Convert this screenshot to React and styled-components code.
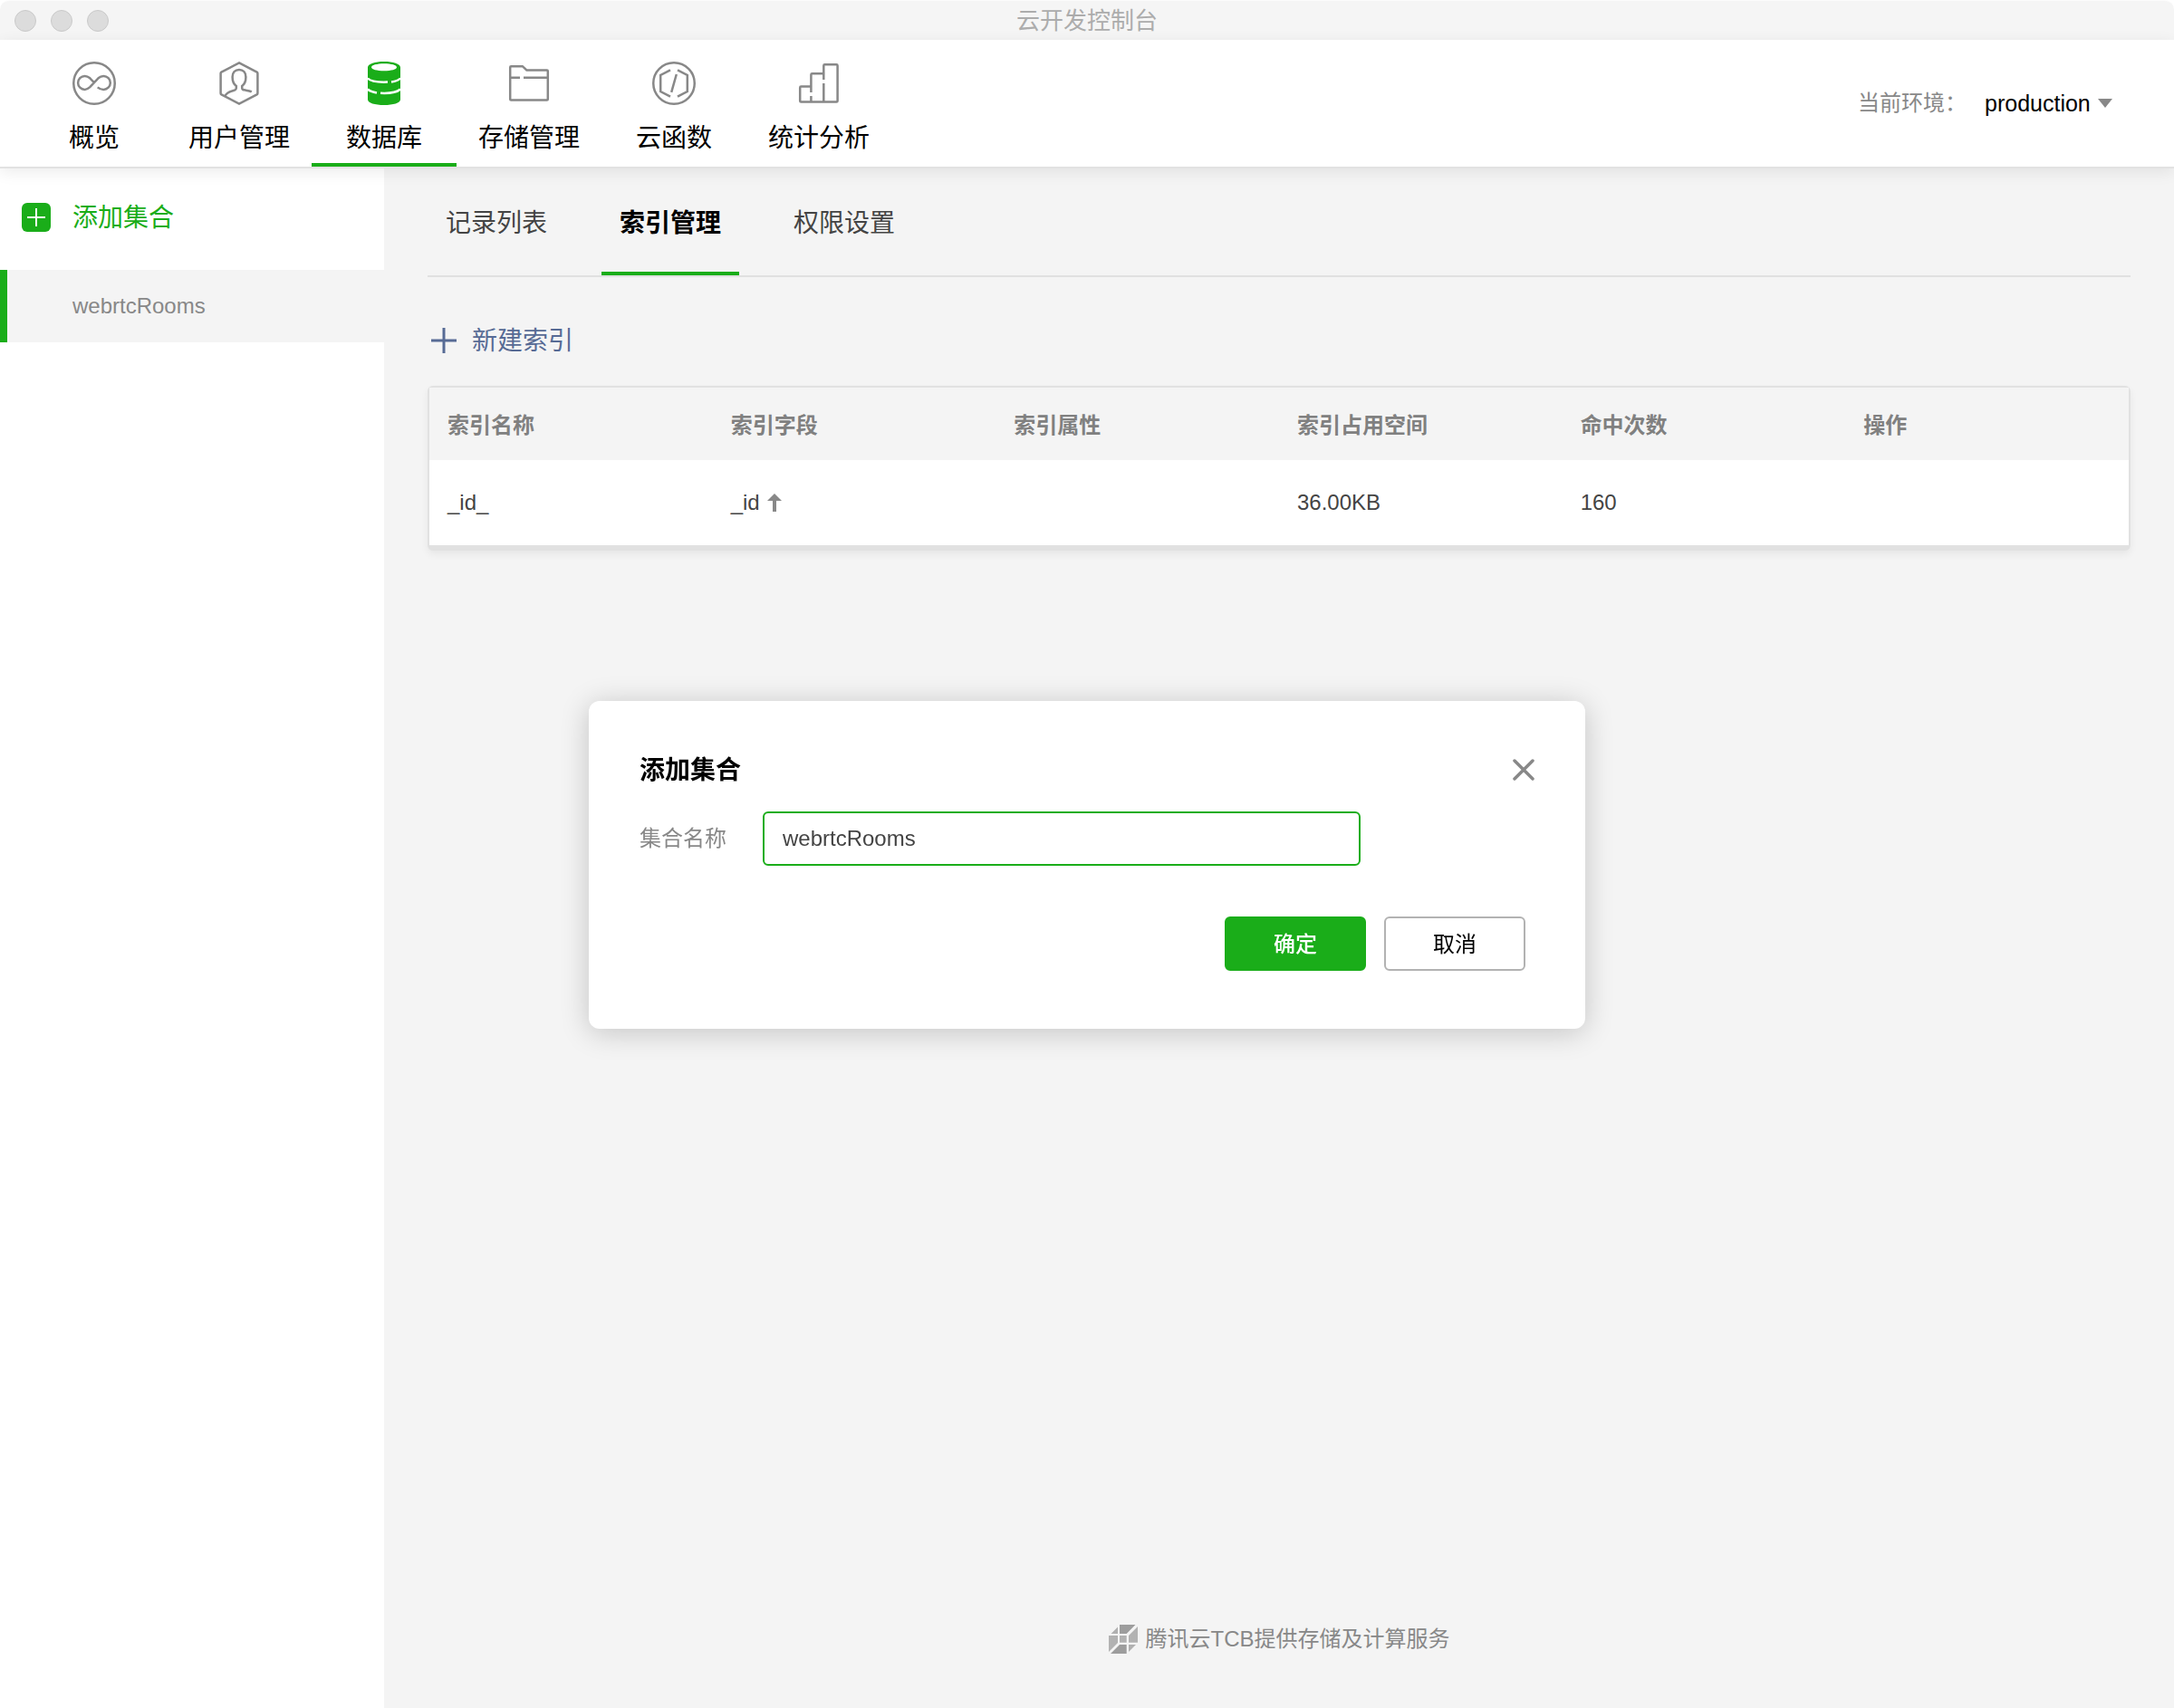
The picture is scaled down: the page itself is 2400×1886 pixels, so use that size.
import { useState } from "react";
import styled, { createGlobalStyle } from "styled-components";

const NAV_ITEMS = [
  { id: "overview", label: "概览", icon: OverviewIcon },
  { id: "users", label: "用户管理", icon: UsersIcon },
  { id: "database", label: "数据库", icon: DatabaseIcon },
  { id: "storage", label: "存储管理", icon: StorageIcon },
  { id: "functions", label: "云函数", icon: FunctionsIcon },
  { id: "stats", label: "统计分析", icon: StatsIcon },
];

const TABS = ["记录列表", "索引管理", "权限设置"];

const COLUMNS = ["索引名称", "索引字段", "索引属性", "索引占用空间", "命中次数", "操作"];

const INDEXES = [{ name: "_id_", field: "_id", attr: "", size: "36.00KB", hits: 160 }];

const App = () => {
  const [page, setPage] = useState("database");
  const [tab, setTab] = useState("索引管理");
  const [dialogOpen, setDialogOpen] = useState(true);

  return (
    <Window>
      <GlobalStyle />
      <TitleBar>
        <div className="lights">
          <span />
          <span />
          <span />
        </div>
        <h1>云开发控制台</h1>
      </TitleBar>

      <Header>
        <Nav>
          {NAV_ITEMS.map(({ id, label, icon: Icon }) => (
            <NavButton key={id} $active={id === page} onClick={() => setPage(id)}>
              <Icon />
              {label}
            </NavButton>
          ))}
        </Nav>
        <Environment>
          <label htmlFor="env">当前环境：</label>
          <div className="select">
            <select id="env" defaultValue="production">
              <option value="production">production</option>
            </select>
            <svg width="16" height="10" viewBox="0 0 16 10">
              <path d="M0 0h16L8 10z" fill="#888" />
            </svg>
          </div>
        </Environment>
      </Header>

      <Body>
        <Sidebar>
          <AddButton onClick={() => setDialogOpen(true)}>
            <svg width="32" height="32" viewBox="0 0 32 32">
              <rect width="32" height="32" rx="6" fill="#1aad19" />
              <path d="M6 16h20M16 6v20" stroke="#fff" strokeWidth="2" />
            </svg>
            <span>添加集合</span>
          </AddButton>
          <CollectionButton>webrtcRooms</CollectionButton>
        </Sidebar>

        <Main>
          <Tabs>
            {TABS.map((name) => (
              <TabButton key={name} $active={name === tab} onClick={() => setTab(name)}>
                {name}
              </TabButton>
            ))}
          </Tabs>

          <NewIndexButton>
            <svg width="28" height="28" viewBox="0 0 28 28">
              <path d="M0 14h28M14 0v28" stroke="#576b95" strokeWidth="3" />
            </svg>
            <span>新建索引</span>
          </NewIndexButton>

          <TableCard>
            <table>
              <thead>
                <tr>
                  {COLUMNS.map((name) => (
                    <th key={name}>{name}</th>
                  ))}
                </tr>
              </thead>
              <tbody>
                {INDEXES.map((row) => (
                  <tr key={row.name}>
                    <td>{row.name}</td>
                    <td>
                      <div className="field">
                        {row.field}
                        <svg width="16" height="20" viewBox="0 0 16 20">
                          <path d="M8 0l8 8h-6v12H6V8H0z" fill="#888" />
                        </svg>
                      </div>
                    </td>
                    <td>{row.attr}</td>
                    <td>{row.size}</td>
                    <td>{row.hits}</td>
                    <td />
                  </tr>
                ))}
              </tbody>
            </table>
          </TableCard>

          <Footer>
            <CubeLogo />
            腾讯云TCB提供存储及计算服务
          </Footer>
        </Main>
      </Body>

      {dialogOpen && <AddCollectionDialog onClose={() => setDialogOpen(false)} />}
    </Window>
  );
};

export default App;

const AddCollectionDialog = ({ onClose }) => {
  const [name, setName] = useState("webrtcRooms");

  return (
    <Overlay>
      <Dialog role="dialog" aria-labelledby="dialog-title">
        <div className="top">
          <h2 id="dialog-title">添加集合</h2>
          <CloseButton aria-label="关闭" onClick={onClose}>
            <svg width="24" height="24" viewBox="0 0 24 24">
              <path d="M2 2l20 20M22 2L2 22" stroke="#888" strokeWidth="3.5" strokeLinecap="round" />
            </svg>
          </CloseButton>
        </div>
        <Field>
          <label htmlFor="collection">集合名称</label>
          <input
            id="collection"
            type="text"
            value={name}
            spellCheck={false}
            onChange={(e) => setName(e.target.value)}
          />
        </Field>
        <Actions>
          <DialogButton $primary onClick={onClose}>
            确定
          </DialogButton>
          <DialogButton onClick={onClose}>取消</DialogButton>
        </Actions>
      </Dialog>
    </Overlay>
  );
};

/* ---------------------------------- ICONS --------------------------------- */

function OverviewIcon() {
  return (
    <NavIcon viewBox="0 0 48 48">
      <circle cx="24" cy="24" r="22.75" />
      <path d="M27.7 28.4C29.6 30 31.6 30.9 34.3 30.9a7.5 7.5 0 0 0 0-15c-2.600 0-4.200 1-5.800 2.400L19.300 28.200c-1.600 1.500-3.200 2.700-5.700 2.700a7.500 7.500 0 0 1 0-15c2.500 0 4.100 1 5.700 2.400l4.900 5.200" />
    </NavIcon>
  );
}

function UsersIcon() {
  return (
    <NavIcon viewBox="0 0 48 48">
      <path d="M24 1.4L43.6 11.6Q44.4 12 44.4 13V35Q44.4 36 43.6 36.4L24 46.6L4.4 36.4Q3.6 36 3.6 35V13Q3.6 12 4.4 11.6Z" />
      <path d="M8.4 38C10 34.8 13 33.2 17 32.2C20 31.4 20.8 31 20.8 29V27C18 25 16.6 21.5 16.6 17C16.6 12 19.5 8.9 24 8.9S31.4 12 31.4 17C31.4 21.5 30 25 27.2 27V29C27.2 31 28 31.2 31 31.6C34 32 35.8 32.2 37.8 33.4" />
    </NavIcon>
  );
}

function DatabaseIcon() {
  return (
    <NavIcon viewBox="0 0 48 48" $solid>
      <path
        fillRule="evenodd"
        d="M6 6.5C6 2.500 14 0 24 0s18 2.500 18 6.500V42c0 3.800-8 6-18 6S6 45.800 6 42ZM24 2.300c-8 0-14 1.600-14 4s6 4 14 4 14-1.600 14-4-6-4-14-4Z"
      />
      <path className="gap" d="M6 18.500c3 3.200 10 4.600 22 4.100M32 22.400c4-.500 8-1.800 10-3.900" />
      <path className="gap" d="M6 30.500c2 1.900 5 3.100 10 3.900M20 34.800c10 .500 18-.700 22-4.300" />
    </NavIcon>
  );
}

function StorageIcon() {
  return (
    <NavIcon viewBox="0 0 48 48">
      <path d="M3.2 6.2Q3.2 5.2 4.2 5.2H16.8L21.4 9.4H43.8Q44.8 9.4 44.8 10.4V41.6Q44.8 42.6 43.8 42.6H4.2Q3.2 42.6 3.2 41.6ZM3.2 17.7H14M18 17.7H44.8" />
    </NavIcon>
  );
}

function FunctionsIcon() {
  return (
    <NavIcon viewBox="0 0 48 48">
      <circle cx="24" cy="24" r="22.75" />
      <path d="M20 9.3L9.2 15V33L20 38.7M28 9.3L38.8 15V33L28 38.7M26.8 14L21.2 33.8" />
    </NavIcon>
  );
}

function StatsIcon() {
  return (
    <NavIcon viewBox="0 0 48 48">
      <path d="M15.4 34V14.4Q15.4 13.2 16.6 13.2H29.3M15.4 27.6H4.4Q3.2 27.6 3.2 28.8V43.4Q3.2 44.6 4.4 44.6H43.4Q44.6 44.6 44.6 43.4V4.4Q44.6 3.2 43.4 3.2H30.5Q29.3 3.2 29.3 4.4V20M29.3 24V44.6M15.4 38V44.6" />
    </NavIcon>
  );
}

function CubeLogo() {
  return (
    <svg width="32" height="32" viewBox="0 0 32 32">
      <path d="M2.5 10L10 2.5V10ZM22 22H30L22 30Z" fill="#b0b0b0" />
      <path d="M12 0H29.5L19.7 10H12ZM12 22H19.7V32H2Z" fill="#9d9d9d" />
      <path d="M32 2V19.7H22V12ZM0 12H10V20L0 30ZM12 12H19.7V19.7H12Z" fill="#b2b2b2" />
    </svg>
  );
}

/* ---------------------------- STYLED COMPONENTS --------------------------- */

const GlobalStyle = createGlobalStyle`
  * {
    box-sizing: border-box;
  }

  body {
    margin: 0;
    background: #fff;
  }

  body, button, input, select {
    font-family: "Liberation Sans", "Noto Sans CJK SC", sans-serif;
    font-size: 24px;
    line-height: 32px;
  }

  button {
    padding: 0;
    border: 0;
    background: none;
    cursor: pointer;
  }

  h1, h2 {
    margin: 0;
  }

  svg {
    display: block;
    flex: none;
  }
`;

const Window = styled.div`
  min-height: 100vh;
  display: flex;
  flex-direction: column;
`;

const TitleBar = styled.div`
  height: 44px;
  padding: 0 16px;
  border-top: 1px solid #fcfcfc;
  border-radius: 10px 10px 0 0;
  background: #f5f5f5;

  display: grid;
  grid-template-columns: 1fr auto 1fr;
  align-items: center;

  .lights {
    display: flex;
    gap: 16px;

    span {
      width: 24px;
      height: 24px;
      border: 1px solid #cacaca;
      border-radius: 50%;
      background: #dcdcdc;
    }
  }

  h1 {
    color: #acacac;
    font-size: 26px;
    font-weight: 400;
  }
`;

const Header = styled.header`
  position: relative;
  z-index: 1;
  padding: 0 68px 0 24px;
  border-bottom: 2px solid #e2e2e2;
  background: #fff;
  box-shadow: 0 4px 16px rgba(0, 0, 0, 0.08);

  display: flex;
  justify-content: space-between;
`;

const Nav = styled.nav`
  display: flex;
`;

const NavButton = styled.button`
  width: 160px;
  height: 140px;
  padding-top: 24px;
  border-bottom: 4px solid ${({ $active }) => ($active ? "#1aad19" : "transparent")};
  color: #000;
  font-size: 28px;

  display: flex;
  flex-direction: column;
  align-items: center;
  gap: 21px;
`;

const NavIcon = styled.svg`
  width: 48px;
  height: 48px;
  fill: ${({ $solid }) => ($solid ? "#1aad19" : "none")};
  stroke: ${({ $solid }) => ($solid ? "none" : "#888")};
  stroke-width: 2.5px;

  .gap {
    fill: none;
    stroke: #fff;
  }
`;

const Environment = styled.div`
  display: flex;
  align-items: center;
  gap: 20px;

  label {
    color: #888;
  }

  .select {
    display: flex;
    align-items: center;
    gap: 8px;
  }

  select {
    appearance: none;
    padding: 0;
    border: 0;
    background: none;
    color: #000;
    font-size: 25px;
  }
`;

const Body = styled.div`
  flex: 1;
  display: flex;
`;

const Sidebar = styled.aside`
  width: 424px;
  flex: none;
  background: #fff;
`;

const AddButton = styled.button`
  width: 100%;
  padding: 37px 24px 41px;
  color: #1aad19;
  font-size: 28px;

  display: flex;
  align-items: center;
  gap: 24px;

  span {
    padding-top: 2px;
  }
`;

const CollectionButton = styled.button`
  width: 100%;
  height: 80px;
  padding: 0 72px;
  border-left: 8px solid #1aad19;
  background: #f4f4f4;
  color: #888;
  font-size: 24px;
  text-align: left;
`;

const Main = styled.main`
  flex: 1;
  padding: 0 48px 60px;
  background: #f4f4f4;

  display: flex;
  flex-direction: column;
  align-items: flex-start;
`;

const Tabs = styled.div`
  width: 100%;
  border-bottom: 2px solid #e0e0e0;

  display: flex;
  gap: 40px;
`;

const TabButton = styled.button`
  height: 118px;
  padding: 8px 20px 0;
  border-bottom: 4px solid ${({ $active }) => ($active ? "#1aad19" : "transparent")};
  color: ${({ $active }) => ($active ? "#000" : "#444")};
  font-size: 28px;
  font-weight: ${({ $active }) => ($active ? 700 : 400)};
`;

const NewIndexButton = styled.button`
  margin: 50px 0 30px;
  padding: 3px 4px;
  color: #576b95;
  font-size: 28px;

  display: flex;
  align-items: center;
  gap: 17px;

  span {
    padding-top: 2px;
  }
`;

const TableCard = styled.div`
  width: 100%;
  border: 2px solid #e1e1e1;
  border-bottom-width: 6px;
  border-radius: 6px;
  background: #fff;
  box-shadow: 0 4px 8px rgba(0, 0, 0, 0.06);

  table {
    width: 100%;
    table-layout: fixed;
    border-collapse: collapse;
  }

  th,
  td {
    padding: 0 20px;
    text-align: left;
  }

  th {
    height: 80px;
    padding-top: 4px;
    background: #f4f4f4;
    color: #808080;
  }

  td {
    height: 94px;
    color: #444;
  }

  .field {
    display: flex;
    align-items: center;
    gap: 8px;
  }
`;

const Footer = styled.footer`
  width: 100%;
  margin-top: auto;
  color: #888;

  display: flex;
  align-items: center;
  justify-content: center;
  gap: 9px;
`;

const Overlay = styled.div`
  position: fixed;
  inset: 0;
  z-index: 2;
  padding-top: 24px;

  display: flex;
  align-items: center;
  justify-content: center;
`;

const Dialog = styled.div`
  width: 1100px;
  max-width: 90vw;
  padding: 60px 56px 64px;
  border-radius: 12px;
  background: #fff;
  box-shadow: 0 4px 32px rgba(0, 0, 0, 0.2);

  .top {
    height: 32px;

    display: flex;
    align-items: center;
    justify-content: space-between;
  }

  h2 {
    padding-top: 2px;
    font-size: 28px;
  }
`;

const CloseButton = styled.button`
  display: flex;
`;

const Field = styled.div`
  margin-top: 30px;

  display: flex;
  align-items: center;
  gap: 40px;

  label {
    color: #888;
  }

  input {
    width: 660px;
    height: 60px;
    padding: 0 20px;
    border: 2px solid #1aad19;
    border-radius: 6px;
    outline: none;
    background: #fff;
    color: #444;
    font-size: 24px;
  }
`;

const Actions = styled.div`
  margin-top: 56px;
  padding-right: 10px;

  display: flex;
  justify-content: flex-end;
  gap: 20px;
`;

const DialogButton = styled.button`
  width: 156px;
  height: 60px;
  padding-top: 2px;
  border: 2px solid ${({ $primary }) => ($primary ? "#1aad19" : "#b2b2b2")};
  border-radius: 6px;
  background: ${({ $primary }) => ($primary ? "#1aad19" : "#fff")};
  color: ${({ $primary }) => ($primary ? "#fff" : "#000")};
  font-weight: ${({ $primary }) => ($primary ? 500 : 400)};
`;
